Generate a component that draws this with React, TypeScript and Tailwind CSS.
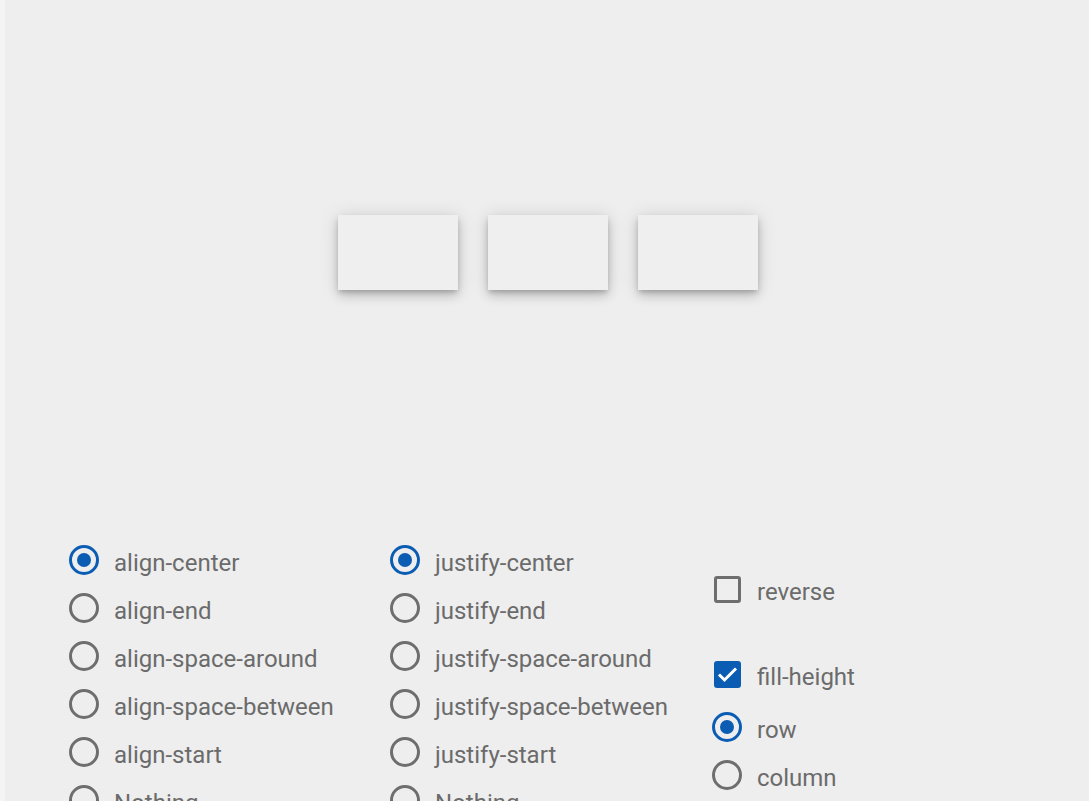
import React from "react";

function Radio({ checked, label }: { checked?: boolean; label: string }) {
  return (
    <div className="flex items-center h-[48px]">
      <div className="w-[30px] h-[30px] flex items-center justify-center">
        {checked ? (
          <div className="w-[30px] h-[30px] rounded-full border-[3px] border-[#0b5db3] flex items-center justify-center">
            <div className="w-[14px] h-[14px] rounded-full bg-[#0b5db3]" />
          </div>
        ) : (
          <div className="w-[30px] h-[30px] rounded-full border-[3px] border-[#6e6e6e]" />
        )}
      </div>
      <span className="ml-[15px] pt-[5px] text-[24px] text-[#6b6b6b] leading-none whitespace-nowrap">{label}</span>
    </div>
  );
}

function Checkbox({ checked, label }: { checked?: boolean; label: string }) {
  return (
    <div className="flex items-center h-[48px]">
      <div className="w-[30px] h-[30px] flex items-center justify-center">
        {checked ? (
          <div className="w-[27px] h-[27px] rounded-[3px] bg-[#0b5db3] flex items-center justify-center">
            <svg width="27" height="27" viewBox="0 0 27 27">
              <path d="M5 13.5 L10.5 19 L22 7.5" fill="none" stroke="white" strokeWidth="3" />
            </svg>
          </div>
        ) : (
          <div className="w-[27px] h-[27px] rounded-[3px] border-[3px] border-[#6e6e6e]" />
        )}
      </div>
      <span className="ml-[15px] pt-[5px] text-[24px] text-[#6b6b6b] leading-none whitespace-nowrap">{label}</span>
    </div>
  );
}

export default function App() {
  const align = ["align-center", "align-end", "align-space-around", "align-space-between", "align-start", "Nothing"];
  const justify = ["justify-center", "justify-end", "justify-space-around", "justify-space-between", "justify-start", "Nothing"];
  return (
    <div
      className="w-[1089px] h-[801px] overflow-hidden bg-[#f4f4f4] pl-[5px]"
      style={{ fontFamily: "Roboto, 'Liberation Sans', sans-serif" }}
    >
      <div className="h-full bg-[#eeeeee]">
        <div className="h-[505px] flex items-center justify-center gap-[30px] pl-[2px]">
          {[0, 1, 2].map((i) => (
            <div
              key={i}
              className="w-[120px] h-[75px] bg-[#efefef] shadow-[0_3px_5px_-1px_rgba(0,0,0,0.2),0_6px_10px_0_rgba(0,0,0,0.14),0_1px_18px_0_rgba(0,0,0,0.12)]"
            />
          ))}
        </div>
        <div className="flex pt-[31px]">
          <div className="ml-[64px] w-[321px] flex flex-col">
            {align.map((a, i) => (
              <Radio key={a} label={a} checked={i === 0} />
            ))}
          </div>
          <div className="w-[322px] flex flex-col">
            {justify.map((a, i) => (
              <Radio key={a} label={a} checked={i === 0} />
            ))}
          </div>
          <div className="flex flex-col">
            <div className="mt-[29px]">
              <Checkbox label="reverse" />
            </div>
            <div className="mt-[37px]">
              <Checkbox label="fill-height" checked />
            </div>
            <div className="mt-[5px]">
              <Radio label="row" checked />
              <Radio label="column" />
            </div>
          </div>
        </div>
      </div>
    </div>
  );
}
